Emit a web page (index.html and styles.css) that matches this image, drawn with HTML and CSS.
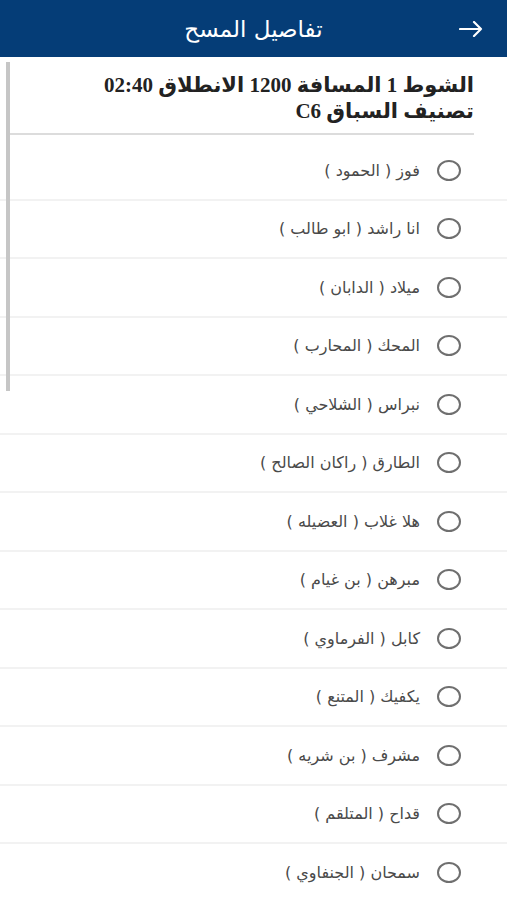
FILE: index.html
```html
<!DOCTYPE html>
<html lang="ar" dir="rtl">
<head>
    <meta charset="UTF-8">
    <meta name="viewport" content="width=device-width, initial-scale=1.0">
    <title>تفاصيل المسح</title>
    <link rel="stylesheet" href="styles.css">
</head>
<body>
    <header class="topbar">
        <button class="back-btn" aria-label="رجوع">
            <svg width="24" height="16" viewBox="0 0 24 16">
                <path d="M1 8 H22 M15 1 L22 8 L15 15" fill="none" stroke="#fff" stroke-width="2.2" stroke-linecap="round" stroke-linejoin="round"/>
            </svg>
        </button>
        <h1 class="topbar-title">تفاصيل المسح</h1>
    </header>

    <main class="content">
        <div class="scroll-thumb"></div>

        <div class="race-info">
            <h2>الشوط 1 المسافة 1200 الانطلاق 02:40<br>تصنيف السباق C6</h2>
        </div>

        <!-- horses list -->
        <ul class="horse-list">
            <li class="horse-row"><span class="radio"></span><span class="horse-name">فوز ( الحمود )</span></li>
            <li class="horse-row"><span class="radio"></span><span class="horse-name">انا راشد ( ابو طالب )</span></li>
            <li class="horse-row"><span class="radio"></span><span class="horse-name">ميلاد ( الدابان )</span></li>
            <li class="horse-row"><span class="radio"></span><span class="horse-name">المحك ( المحارب )</span></li>
            <li class="horse-row"><span class="radio"></span><span class="horse-name">نبراس ( الشلاحي )</span></li>
            <li class="horse-row"><span class="radio"></span><span class="horse-name">الطارق ( راكان الصالح )</span></li>
            <li class="horse-row"><span class="radio"></span><span class="horse-name">هلا غلاب ( العضيله )</span></li>
            <li class="horse-row"><span class="radio"></span><span class="horse-name">مبرهن ( بن غيام )</span></li>
            <li class="horse-row"><span class="radio"></span><span class="horse-name">كابل ( الفرماوي )</span></li>
            <li class="horse-row"><span class="radio"></span><span class="horse-name">يكفيك ( المتنع )</span></li>
            <li class="horse-row"><span class="radio"></span><span class="horse-name">مشرف ( بن شريه )</span></li>
            <li class="horse-row"><span class="radio"></span><span class="horse-name">قداح ( المتلقم )</span></li>
            <li class="horse-row"><span class="radio"></span><span class="horse-name">سمحان ( الجنفاوي )</span></li>
        </ul>
    </main>
</body>
</html>
```

FILE: styles.css
```css
* {
    box-sizing: border-box;
}
body {
    margin: 0;
    background: #fff;
    font-family: "DejaVu Sans", "Noto Sans", sans-serif;
    overflow: hidden;
}
.topbar {
    height: 57px;
    background: #053d77;
    display: flex;
    align-items: center;
    position: relative;
    padding-right: 24px;
}
.back-btn {
    background: none;
    border: none;
    padding: 0;
    display: flex;
    cursor: pointer;
}
.topbar-title {
    position: absolute;
    left: 0;
    right: 0;
    margin: 0;
    text-align: center;
    color: #fff;
    font-size: 23px;
    font-weight: 500;
    pointer-events: none;
}
.content {
    position: relative;
}
.scroll-thumb {
    position: absolute;
    left: 6px;
    top: 5px;
    width: 4px;
    height: 329px;
    background: #c6c6c6;
}
.race-info {
    margin: 0 33px 0 8px;
    padding: 15px 0 9px;
    border-bottom: 2px solid #dcdcdc;
}
.race-info h2 {
    margin: 0;
    font-family: "Liberation Serif", "DejaVu Sans", serif;
    font-size: 21px;
    line-height: 26px;
    font-weight: bold;
    color: #222;
}
.horse-list {
    list-style: none;
    margin: 7px 0 0;
    padding: 0;
}
.horse-row {
    height: 58.5px;
    display: flex;
    align-items: center;
    gap: 17px;
    padding-right: 46px;
    border-bottom: 2px solid #f2f2f2;
}
.radio {
    width: 24px;
    height: 21px;
    border: 2px solid #6f6f6f;
    border-radius: 50%;
    flex-shrink: 0;
}
.horse-name {
    font-size: 16px;
    color: #4a4a4a;
}
```
